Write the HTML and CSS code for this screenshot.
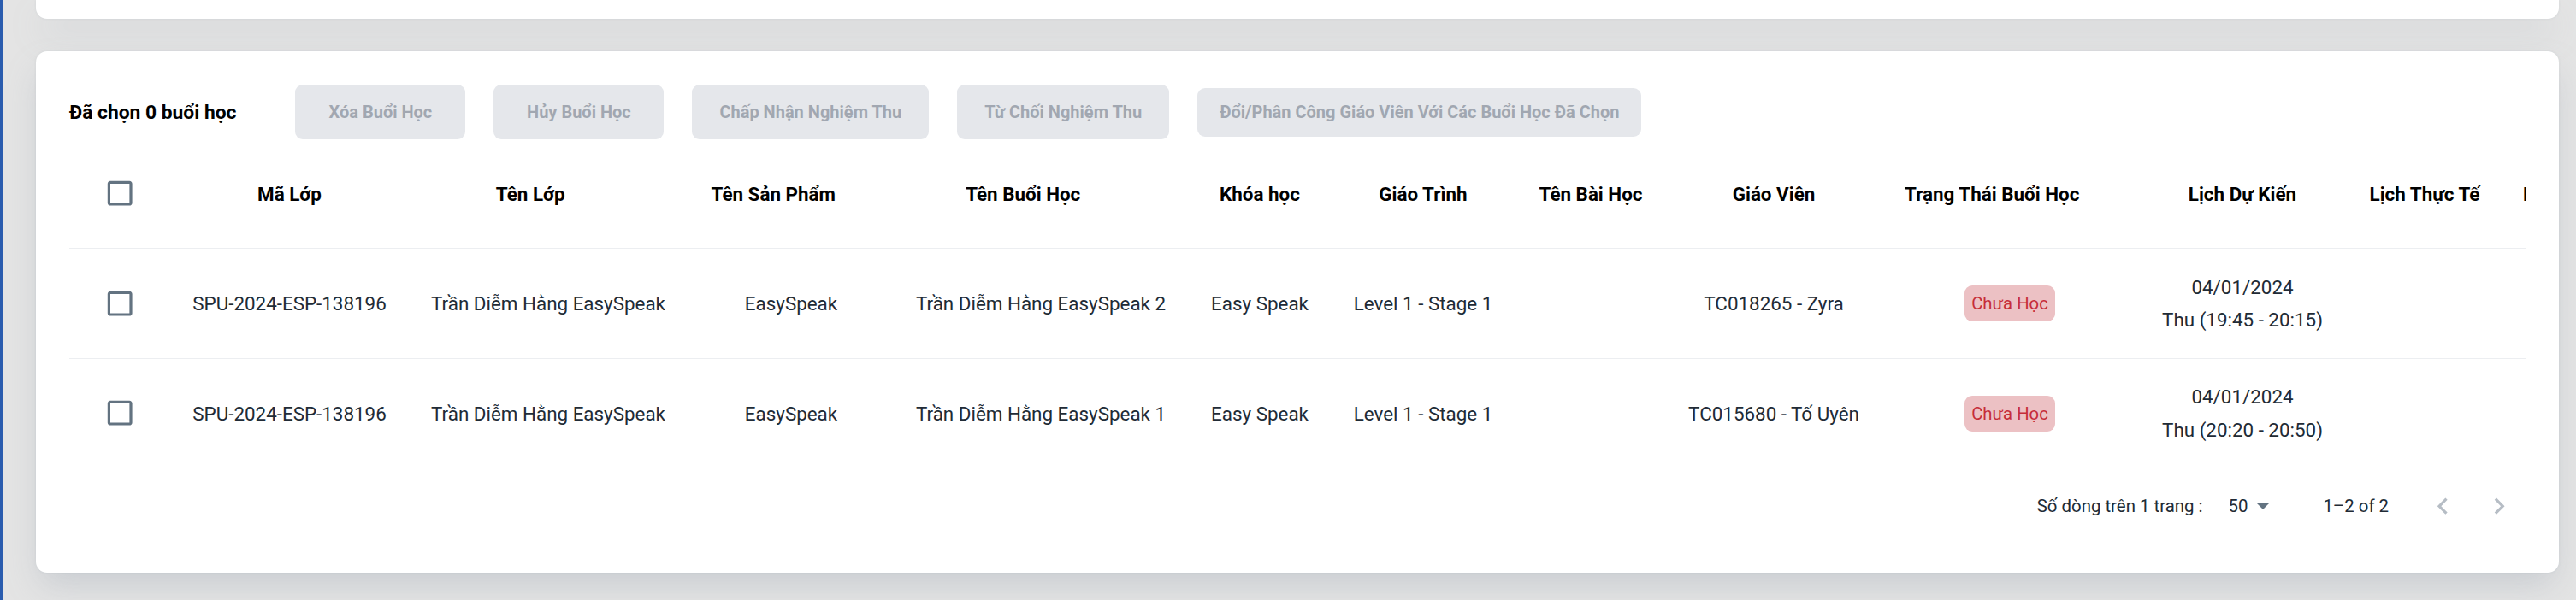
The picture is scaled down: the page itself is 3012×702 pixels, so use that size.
FILE: index.html
```html
<!DOCTYPE html>
<html lang="vi">
<head>
<meta charset="utf-8">
<title>Buổi học</title>
<link rel="stylesheet" href="styles.css">
</head>
<body>
<div class="app">
  <div class="rail"></div>
  <main class="content">
    <div class="card card-top"></div>
    <section class="card card-main">
      <div class="toolbar">
        <span class="selected">Đã chọn 0 buổi học</span>
        <button class="btn" disabled>Xóa Buổi Học</button>
        <button class="btn" disabled>Hủy Buổi Học</button>
        <button class="btn" disabled>Chấp Nhận Nghiệm Thu</button>
        <button class="btn" disabled>Từ Chối Nghiệm Thu</button>
        <button class="btn btn-wide" disabled>Đổi/Phân Công Giáo Viên Với Các Buổi Học Đã Chọn</button>
      </div>

      <div class="table-wrap">
        <div class="grid">
          <div class="row head">
            <div class="cell"><span class="checkbox"><svg viewBox="0 0 24 24"><path d="M19 5v14H5V5h14m0-2H5c-1.11 0-2 .9-2 2v14c0 1.1.89 2 2 2h14c1.1 0 2-.9 2-2V5c0-1.1-.9-2-2-2z"/></svg></span></div>
            <div class="cell">Mã Lớp</div>
            <div class="cell">Tên Lớp<svg class="sort" viewBox="0 0 24 24"><path d="M20 12l-1.41-1.41L13 16.17V4h-2v12.17l-5.58-5.59L4 12l8 8 8-8z"/></svg></div>
            <div class="cell">Tên Sản Phẩm<svg class="sort" viewBox="0 0 24 24"><path d="M20 12l-1.41-1.41L13 16.17V4h-2v12.17l-5.58-5.59L4 12l8 8 8-8z"/></svg></div>
            <div class="cell">Tên Buổi Học<svg class="sort" viewBox="0 0 24 24"><path d="M20 12l-1.41-1.41L13 16.17V4h-2v12.17l-5.58-5.59L4 12l8 8 8-8z"/></svg></div>
            <div class="cell">Khóa học</div>
            <div class="cell">Giáo Trình</div>
            <div class="cell">Tên Bài Học</div>
            <div class="cell">Giáo Viên</div>
            <div class="cell">Trạng Thái Buổi Học<svg class="sort" viewBox="0 0 24 24"><path d="M20 12l-1.41-1.41L13 16.17V4h-2v12.17l-5.58-5.59L4 12l8 8 8-8z"/></svg></div>
            <div class="cell">Lịch Dự Kiến</div>
            <div class="cell">Lịch Thực Tế</div>
            <div class="cell cell-left">Lý Do Hủy</div>
          </div>

          <div class="row body">
            <div class="cell"><span class="checkbox"><svg viewBox="0 0 24 24"><path d="M19 5v14H5V5h14m0-2H5c-1.11 0-2 .9-2 2v14c0 1.1.89 2 2 2h14c1.1 0 2-.9 2-2V5c0-1.1-.9-2-2-2z"/></svg></span></div>
            <div class="cell">SPU-2024-ESP-138196</div>
            <div class="cell">Trần Diễm Hằng EasySpeak</div>
            <div class="cell">EasySpeak</div>
            <div class="cell">Trần Diễm Hằng EasySpeak 2</div>
            <div class="cell">Easy Speak</div>
            <div class="cell">Level 1 - Stage 1</div>
            <div class="cell"></div>
            <div class="cell">TC018265 - Zyra</div>
            <div class="cell"><span class="badge">Chưa Học</span></div>
            <div class="cell"><span class="schedule">04/01/2024<br>Thu (19:45 - 20:15)</span></div>
            <div class="cell"></div>
            <div class="cell"></div>
          </div>

          <div class="row body">
            <div class="cell"><span class="checkbox"><svg viewBox="0 0 24 24"><path d="M19 5v14H5V5h14m0-2H5c-1.11 0-2 .9-2 2v14c0 1.1.89 2 2 2h14c1.1 0 2-.9 2-2V5c0-1.1-.9-2-2-2z"/></svg></span></div>
            <div class="cell">SPU-2024-ESP-138196</div>
            <div class="cell">Trần Diễm Hằng EasySpeak</div>
            <div class="cell">EasySpeak</div>
            <div class="cell">Trần Diễm Hằng EasySpeak 1</div>
            <div class="cell">Easy Speak</div>
            <div class="cell">Level 1 - Stage 1</div>
            <div class="cell"></div>
            <div class="cell">TC015680 - Tố Uyên</div>
            <div class="cell"><span class="badge">Chưa Học</span></div>
            <div class="cell"><span class="schedule">04/01/2024<br>Thu (20:20 - 20:50)</span></div>
            <div class="cell"></div>
            <div class="cell"></div>
          </div>
        </div>
      </div>

      <div class="pager">
        <span class="pager-label">Số dòng trên 1 trang :</span>
        <span class="pager-select">50<svg class="drop" viewBox="7 10 10 5"><path d="M7 10l5 5 5-5z"/></svg></span>
        <span class="pager-rows">1–2 of 2</span>
        <span class="pager-actions">
          <span class="icon-btn"><svg viewBox="0 0 24 24"><path d="M15.41 16.59 10.83 12l4.58-4.59L14 6l-6 6 6 6z"/></svg></span>
          <span class="icon-btn"><svg viewBox="0 0 24 24"><path d="M8.59 16.59 13.17 12 8.59 7.41 10 6l6 6-6 6z"/></svg></span>
        </span>
      </div>
    </section>
  </main>
</div>
</body>
</html>
```

FILE: styles.css
```css
html, body {
  margin: 0;
  padding: 0;
}

body {
  font-family: Roboto, "Noto Sans", "Liberation Sans", sans-serif;
  background: #e4e4e4;
  color: #212b36;
  overflow: hidden;
}

.app {
  display: flex;
  height: 702px;
  width: 3012px;
}

.rail {
  width: 3px;
  flex: none;
  background: #2a5cae;
}

.content {
  flex: 1;
  min-width: 0;
  padding: 0 20px 0 39px;
  display: flex;
  flex-direction: column;
}

.card {
  background: #ffffff;
  box-shadow: 0 0 3px rgba(145, 158, 171, 0.2), 0 19px 38px -6px rgba(145, 158, 171, 0.35);
}

.card-top {
  height: 22px;
  flex: none;
  border-radius: 0 0 13px 13px;
}

.card-main {
  min-width: 0;
  margin-top: 38px;
  border-radius: 13px;
  padding: 39px 38px 34px 39px;
}

/* Toolbar */
.toolbar {
  display: flex;
  align-items: center;
  gap: 33px;
  height: 64px;
}

.selected {
  font-weight: 700;
  font-size: 22.8px;
  color: #000;
  margin-right: 36px;
  white-space: nowrap;
}

.btn {
  height: 64px;
  min-width: 199px;
  padding: 0 32px;
  border: none;
  border-radius: 9px;
  background: #e5e7eb;
  color: #a1a7b1;
  font-family: inherit;
  font-weight: 700;
  font-size: 20px;
  white-space: nowrap;
}

.btn-wide {
  height: 57px;
  padding: 0 26px;
}

/* Table */
.table-wrap {
  overflow: hidden;
  min-width: 0;
}

.grid {
  width: 3047px;
}

.row {
  display: grid;
  grid-template-columns: 118px 279px 326px 242px 342px 170px 212px 180px 248px 304px 240px 186px 200px;
  border-bottom: 1px solid #eceef1;
  box-sizing: border-box;
}

.row.head {
  height: 128px;
  font-weight: 700;
  color: #000;
  font-size: 22.4px;
}

.row.body {
  height: 129px;
  font-size: 22.4px;
  color: #212b36;
}

.row.body:last-child {
  height: 128px;
}

.cell {
  display: flex;
  align-items: center;
  justify-content: center;
  padding: 0 25.6px;
  white-space: nowrap;
  min-width: 0;
}

.cell-left {
  justify-content: flex-start;
  padding-left: 22px;
}

.sort {
  width: 28.8px;
  height: 28.8px;
  margin: 0 6.4px;
  flex: none;
  opacity: 0;
}

.checkbox {
  width: 67px;
  height: 67px;
  display: flex;
  align-items: center;
  justify-content: center;
}

.checkbox svg {
  width: 38.4px;
  height: 38.4px;
  fill: #637381;
}

.badge {
  display: inline-flex;
  align-items: center;
  height: 42px;
  padding: 0 8px;
  border-radius: 9px;
  background: #ecc1c4;
  color: #c62d39;
  font-size: 20.3px;
}

.schedule {
  text-align: center;
  line-height: 38.4px;
}

/* Pagination */
.pager {
  display: flex;
  justify-content: flex-end;
  align-items: center;
  height: 88px;
  font-size: 20.4px;
  color: #212b36;
}

.pager-select {
  display: inline-flex;
  align-items: center;
  margin-left: 30px;
}

.drop {
  width: 16px;
  height: 8px;
  margin-left: 10px;
  fill: #637381;
}

.pager-rows {
  margin-left: 62px;
}

.pager-actions {
  display: inline-flex;
  gap: 2px;
  margin-left: 31px;
}

.icon-btn {
  width: 64px;
  height: 64px;
  display: flex;
  align-items: center;
  justify-content: center;
}

.icon-btn svg {
  width: 38.4px;
  height: 38.4px;
  fill: #b6bdc5;
}
```
